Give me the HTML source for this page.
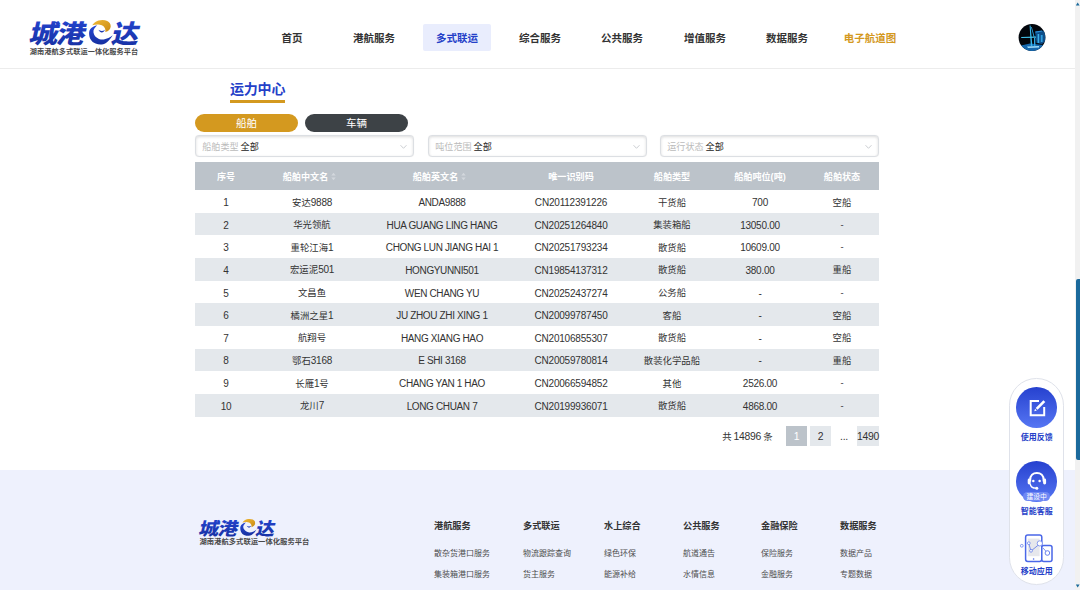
<!DOCTYPE html>
<html lang="zh-CN">
<head>
<meta charset="utf-8">
<title>城港e达 - 运力中心</title>
<style>
*{box-sizing:border-box;margin:0;padding:0}
html,body{width:1080px;height:590px;overflow:hidden;background:#fff}
body{font-family:"Liberation Sans","Noto Sans CJK SC",sans-serif;color:#333;position:relative;font-size:10px}
.abs{position:absolute}
#hdr{position:absolute;left:0;top:0;width:1075px;height:69px;background:#fff;border-bottom:1px solid #ececec}
.nav{position:absolute;top:24px;height:27px;line-height:28px;width:68px;text-align:center;font-size:10.5px;font-weight:bold;color:#333;border-radius:2px}
.nav.on{background:#e9edfd;color:#2440c8}
.nav.gold{color:#d4991f}
#title{position:absolute;left:230px;top:79px;font-size:14px;font-weight:bold;color:#2440c8;line-height:20px;letter-spacing:-0.2px}
#tline{position:absolute;left:230px;top:99.5px;width:55px;height:3px;background:#d4991f}
.pill{position:absolute;top:114px;height:18px;width:103px;border-radius:9px;color:#fff;font-size:10.5px;line-height:18px;text-align:center}
.sel{position:absolute;top:135px;height:22px;border:1px solid #dcdfe3;border-radius:4px;background:#fff;box-shadow:inset 0 1px 3px rgba(0,0,0,.14),0 0 1px rgba(0,0,0,.08);font-size:9.1px;line-height:23px;padding-left:6.2px;color:#222;white-space:nowrap}
.sel i{font-style:normal;color:#bbb;margin-right:2px}
.sel svg{position:absolute;right:6px;top:8px}
#tbl{position:absolute;left:195px;top:161.6px;width:684px;border-collapse:collapse;table-layout:fixed;font-size:9.4px}
#tbl th{height:28.6px;background:#bcc3ca;color:#fff;font-weight:bold;font-size:9.1px;text-align:center;padding:0}
#tbl th:last-child,#tbl td:last-child{padding-left:4px}
#tbl th:nth-child(2),#tbl th:nth-child(3){padding-right:5px}
.n{font-size:10px;letter-spacing:-0.27px}
#tbl td.n{padding-top:2px}
#tbl td.e{letter-spacing:-0.36px}
#tbl td.c{letter-spacing:-0.2px}
.so{display:inline-block;vertical-align:middle;margin-left:3px;margin-top:-2px}
#tbl td{height:22.65px;text-align:center;padding:0;color:#333;white-space:nowrap}
#tbl tbody tr:nth-child(even) td{background:#e4e8ec}
.pg{position:absolute;top:426px;height:20px;line-height:21.5px;font-size:10.4px;letter-spacing:-0.3px;text-align:center;color:#333}
#foot{position:absolute;left:0;top:470px;width:1075px;height:120px;background:#eef1fd}
.fh{position:absolute;top:519px;font-size:9.2px;font-weight:bold;color:#333;line-height:14px;white-space:nowrap}
.fl{position:absolute;font-size:8px;color:#4d4d4d;line-height:12px;white-space:nowrap}
#sb{position:absolute;left:1074.5px;top:0;width:5.5px;height:590px;background:#f1f1f1}
#thumb{position:absolute;left:1075.8px;top:279px;width:4.2px;height:180.5px;background:#1b6a9c;border-radius:2px 0 0 2px}
#float{position:absolute;left:1009px;top:378px;width:54.6px;height:207px;background:#fff;border-radius:27.3px;border:1px solid #dfe2ea}
.fc{position:absolute;left:1016px;width:41.4px;height:41px;border-radius:50%;background:linear-gradient(180deg,#2641cf,#5676f3)}
.ft{position:absolute;left:1008.3px;width:57px;text-align:center;font-size:8px;font-weight:bold;color:#2440c8;line-height:10px}
</style>
</head>
<body>
<div id="hdr">
  <svg class="abs" style="left:0;top:0" width="160" height="68" viewBox="0 0 160 68">
    <defs><linearGradient id="lg" x1="0" y1="0" x2="0" y2="1"><stop offset="0" stop-color="#2547d6"/><stop offset="1" stop-color="#16309f"/></linearGradient>
    <linearGradient id="gg" x1="0" y1="0" x2="1" y2="1"><stop offset="0" stop-color="#f0b938"/><stop offset="1" stop-color="#c98a12"/></linearGradient></defs>
    <g transform="translate(0,43.2) skewX(-13)" font-family="'Noto Sans CJK SC',sans-serif" font-weight="900" font-size="25.5" fill="url(#lg)">
      <text x="28" y="0" textLength="29" lengthAdjust="spacingAndGlyphs">城</text>
      <text x="55.6" y="0" textLength="28.5" lengthAdjust="spacingAndGlyphs">港</text>
      <text x="110.5" y="0" textLength="27.3" lengthAdjust="spacingAndGlyphs">达</text>
    </g>
    <path d="M92.2 25.3 C93.6 23.2 96.2 21.2 98.5 20.6 C101.7 19.7 104.8 19.9 107.2 21 C109.6 22.2 110.8 24.2 110.7 26.4 C110.6 29 108.6 31 105.3 32 C105.6 30.6 105.5 29.4 105 28.4 C104.5 27.4 104 26.7 103.5 26.2 C102.5 25.4 101.3 24.9 99.9 24.7 C97.6 24.3 94.6 24.6 92.2 25.3Z" fill="url(#gg)"/>
    <path d="M97.1 25.3 C94.6 26 92.6 27 91.3 28 C89.6 29.6 89 31.4 89.1 33.5 C89.2 35.8 89.6 37.8 90.7 39.6 C91.8 41.4 93.4 42.8 95.6 43.6 C97.6 44.4 99.7 44.7 101.7 44.5 C103.7 44.3 105.6 43.4 107.2 42 C109.4 40.2 111.4 37.8 112.7 35.3 C111.4 36.5 110 37.4 108.4 38.1 C106.4 39 104.3 39.6 102.3 39.6 C100.4 39.5 98.8 39 97.4 38 C95.8 37 94.7 35.8 94.1 34.4 C93.5 33.2 93.3 31.9 93.5 30.6 C93.8 29.3 94.5 28.2 95.4 27.3 C96 26.5 96.5 25.9 97.1 25.3Z" fill="url(#lg)"/>
    <path d="M98.4 29.8 C99.3 31.4 100.5 32.3 101.8 32.5 C103.1 32.4 104.2 31.5 104.9 29.8 C103.9 30.6 102.8 31 101.7 31 C100.5 31 99.4 30.5 98.4 29.8Z" fill="url(#lg)"/>
    <text x="29.8" y="54.3" font-size="7.15" font-weight="bold" fill="#4a4a4a" textLength="108.4" lengthAdjust="spacing">湖南港航多式联运一体化服务平台</text>
  </svg>
  <div class="nav" style="left:258px">首页</div>
  <div class="nav" style="left:340px">港航服务</div>
  <div class="nav on" style="left:423px">多式联运</div>
  <div class="nav" style="left:506px">综合服务</div>
  <div class="nav" style="left:588px">公共服务</div>
  <div class="nav" style="left:671px">增值服务</div>
  <div class="nav" style="left:753px">数据服务</div>
  <div class="nav gold" style="left:836px">电子航道图</div>
  <svg class="abs" style="left:1016px;top:22px" width="32" height="32" viewBox="1016 22 32 32">
    <defs><clipPath id="ac"><circle cx="1032" cy="37.5" r="13.4"/></clipPath><filter id="bl" x="-30%" y="-30%" width="160%" height="160%"><feGaussianBlur stdDeviation="0.45"/></filter></defs>
    <circle cx="1032" cy="37.5" r="13.4" fill="#02060c"/>
    <g clip-path="url(#ac)" filter="url(#bl)">
      <path d="M1035 31.5 L1045 30.5 L1045.6 41 L1042 44 L1036.5 43Z" fill="#0d4f8a"/>
      <path d="M1021 45.5 L1030 43.6 L1043 45 L1041 51 L1025 51Z" fill="#1268ae"/>
      <path d="M1027 46.6 L1039 46 L1039 47.6 L1028 48Z" fill="#9fdcfa"/>
      <path d="M1029.6 25.5 L1030.6 25.5 L1032.4 46 L1030.8 46Z" fill="#38b8ec"/>
      <path d="M1031 27 L1031.8 27 L1034.6 37 L1033.6 37Z" fill="#2a9fdc"/>
      <path d="M1021 37 L1036 36.4 L1036 37.8 L1021.4 37.9Z" fill="#43c6f0"/>
      <path d="M1037.6 34 L1039.2 34 L1039.2 43 L1037.6 43Z" fill="#39aee8"/>
      <path d="M1040.8 35 L1042.6 35 L1042.6 42 L1040.8 42Z" fill="#2f9fe0"/>
      <path d="M1035.4 31.6 L1042 30.4 L1042 31.6 L1035.6 32.8Z" fill="#2a8fd6"/>
      <path d="M1034 38 L1035.4 38 L1035.4 46 L1034 46Z" fill="#2fa6e4"/>
    </g>
  </svg>
</div>

<div id="title">运力中心</div>
<div id="tline"></div>
<div class="pill" style="left:195px;background:#d4991f">船舶</div>
<div class="pill" style="left:305px;background:#3d4246">车辆</div>

<div class="sel" style="left:195px;width:219px"><i>船舶类型</i>全部<svg width="7" height="6" viewBox="0 0 7 6"><path d="M0.5 1.2 L3.5 4.3 L6.5 1.2" fill="none" stroke="#bfc2c6" stroke-width="0.8"/></svg></div>
<div class="sel" style="left:428px;width:219px"><i>吨位范围</i>全部<svg width="7" height="6" viewBox="0 0 7 6"><path d="M0.5 1.2 L3.5 4.3 L6.5 1.2" fill="none" stroke="#bfc2c6" stroke-width="0.8"/></svg></div>
<div class="sel" style="left:660px;width:219px"><i>运行状态</i>全部<svg width="7" height="6" viewBox="0 0 7 6"><path d="M0.5 1.2 L3.5 4.3 L6.5 1.2" fill="none" stroke="#bfc2c6" stroke-width="0.8"/></svg></div>

<table id="tbl">
<colgroup><col style="width:62px"><col style="width:110px"><col style="width:150px"><col style="width:108px"><col style="width:94px"><col style="width:82px"><col style="width:78px"></colgroup>
<thead><tr><th>序号</th><th>船舶中文名<svg class="so" width="5" height="9" viewBox="0 0 5 9"><path d="M0.3 3.6 L2.5 0.8 L4.7 3.6Z M0.3 5.4 L2.5 8.2 L4.7 5.4Z" fill="#d3d8dd"/></svg></th><th>船舶英文名<svg class="so" width="5" height="9" viewBox="0 0 5 9"><path d="M0.3 3.6 L2.5 0.8 L4.7 3.6Z M0.3 5.4 L2.5 8.2 L4.7 5.4Z" fill="#d3d8dd"/></svg></th><th>唯一识别码</th><th>船舶类型</th><th>船舶吨位(吨)</th><th>船舶状态</th></tr></thead>
<tbody>
<tr><td class="n">1</td><td>安达<span class="n">9888</span></td><td class="n e">ANDA9888</td><td class="n c">CN20112391226</td><td>干货船</td><td class="n">700</td><td>空船</td></tr>
<tr><td class="n">2</td><td>华光领航</td><td class="n e">HUA GUANG LING HANG</td><td class="n c">CN20251264840</td><td>集装箱船</td><td class="n">13050.00</td><td>-</td></tr>
<tr><td class="n">3</td><td>重轮江海<span class="n">1</span></td><td class="n e">CHONG LUN JIANG HAI 1</td><td class="n c">CN20251793234</td><td>散货船</td><td class="n">10609.00</td><td>-</td></tr>
<tr><td class="n">4</td><td>宏运泥<span class="n">501</span></td><td class="n e">HONGYUNNI501</td><td class="n c">CN19854137312</td><td>散货船</td><td class="n">380.00</td><td>重船</td></tr>
<tr><td class="n">5</td><td>文昌鱼</td><td class="n e">WEN CHANG YU</td><td class="n c">CN20252437274</td><td>公务船</td><td class="n">-</td><td>-</td></tr>
<tr><td class="n">6</td><td>橘洲之星<span class="n">1</span></td><td class="n e">JU ZHOU ZHI XING 1</td><td class="n c">CN20099787450</td><td>客船</td><td class="n">-</td><td>空船</td></tr>
<tr><td class="n">7</td><td>航翔号</td><td class="n e">HANG XIANG HAO</td><td class="n c">CN20106855307</td><td>散货船</td><td class="n">-</td><td>空船</td></tr>
<tr><td class="n">8</td><td>鄂石<span class="n">3168</span></td><td class="n e">E SHI 3168</td><td class="n c">CN20059780814</td><td>散装化学品船</td><td class="n">-</td><td>重船</td></tr>
<tr><td class="n">9</td><td>长雁<span class="n">1</span>号</td><td class="n e">CHANG YAN 1 HAO</td><td class="n c">CN20066594852</td><td>其他</td><td class="n">2526.00</td><td>-</td></tr>
<tr><td class="n">10</td><td>龙川<span class="n">7</span></td><td class="n e">LONG CHUAN 7</td><td class="n c">CN20199936071</td><td>散货船</td><td class="n">4868.00</td><td>-</td></tr>
</tbody>
</table>

<div class="pg" style="left:701.3px;width:92px;font-size:9.4px">共 <span class="n" style="font-size:10.4px">14896</span> 条</div>
<div class="pg" style="left:786px;width:21px;background:#bcc3ca;color:#fff">1</div>
<div class="pg" style="left:810px;width:21px;background:#e4e8ec">2</div>
<div class="pg" style="left:834px;width:20px">...</div>
<div class="pg" style="left:857px;width:22px;background:#e4e8ec">1490</div>

<div id="foot"></div>
<svg class="abs" style="left:0;top:470px" width="400" height="120" viewBox="0 470 400 120">
  <g transform="translate(178.8,505.1) scale(0.69)">
    <g transform="translate(0,43.2) skewX(-13)" font-family="'Noto Sans CJK SC',sans-serif" font-weight="900" font-size="25.5" fill="url(#lg)">
      <text x="28" y="0" textLength="29" lengthAdjust="spacingAndGlyphs">城</text>
      <text x="55.6" y="0" textLength="28.5" lengthAdjust="spacingAndGlyphs">港</text>
      <text x="110.5" y="0" textLength="27.3" lengthAdjust="spacingAndGlyphs">达</text>
    </g>
    <path d="M92.2 25.3 C93.6 23.2 96.2 21.2 98.5 20.6 C101.7 19.7 104.8 19.9 107.2 21 C109.6 22.2 110.8 24.2 110.7 26.4 C110.6 29 108.6 31 105.3 32 C105.6 30.6 105.5 29.4 105 28.4 C104.5 27.4 104 26.7 103.5 26.2 C102.5 25.4 101.3 24.9 99.9 24.7 C97.6 24.3 94.6 24.6 92.2 25.3Z" fill="url(#gg)"/>
    <path d="M97.1 25.3 C94.6 26 92.6 27 91.3 28 C89.6 29.6 89 31.4 89.1 33.5 C89.2 35.8 89.6 37.8 90.7 39.6 C91.8 41.4 93.4 42.8 95.6 43.6 C97.6 44.4 99.7 44.7 101.7 44.5 C103.7 44.3 105.6 43.4 107.2 42 C109.4 40.2 111.4 37.8 112.7 35.3 C111.4 36.5 110 37.4 108.4 38.1 C106.4 39 104.3 39.6 102.3 39.6 C100.4 39.5 98.8 39 97.4 38 C95.8 37 94.7 35.8 94.1 34.4 C93.5 33.2 93.3 31.9 93.5 30.6 C93.8 29.3 94.5 28.2 95.4 27.3 C96 26.5 96.5 25.9 97.1 25.3Z" fill="url(#lg)"/>
    <path d="M98.4 29.8 C99.3 31.4 100.5 32.3 101.8 32.5 C103.1 32.4 104.2 31.5 104.9 29.8 C103.9 30.6 102.8 31 101.7 31 C100.5 31 99.4 30.5 98.4 29.8Z" fill="url(#lg)"/>
  </g>
  <text x="199.4" y="544" font-size="7.3" font-weight="bold" fill="#4a4a4a" textLength="110" lengthAdjust="spacing">湖南港航多式联运一体化服务平台</text>
</svg>
<div class="fh" style="left:434px">港航服务</div>
<div class="fh" style="left:523px">多式联运</div>
<div class="fh" style="left:604px">水上综合</div>
<div class="fh" style="left:683px">公共服务</div>
<div class="fh" style="left:761px">金融保险</div>
<div class="fh" style="left:840px">数据服务</div>

<div class="fl" style="left:434px;top:548px">散杂货港口服务</div>
<div class="fl" style="left:523px;top:548px">物流跟踪查询</div>
<div class="fl" style="left:604px;top:548px">绿色环保</div>
<div class="fl" style="left:683px;top:548px">航道通告</div>
<div class="fl" style="left:761px;top:548px">保险服务</div>
<div class="fl" style="left:840px;top:548px">数据产品</div>
<div class="fl" style="left:434px;top:569px">集装箱港口服务</div>
<div class="fl" style="left:523px;top:569px">货主服务</div>
<div class="fl" style="left:604px;top:569px">能源补给</div>
<div class="fl" style="left:683px;top:569px">水情信息</div>
<div class="fl" style="left:761px;top:569px">金融服务</div>
<div class="fl" style="left:840px;top:569px">专题数据</div>

<div id="float"></div>
<div class="fc" style="top:387px"></div>
<svg class="abs" style="left:1016px;top:386px" width="42" height="42" viewBox="0 0 42 42">
  <path d="M23 15.1 H14.7 V29.2 H28.2 V21" fill="none" stroke="#fff" stroke-width="2"/>
  <path d="M27.4 14.2 L29.3 16.1 L21.6 23.8 L19.7 21.9Z" fill="#fff"/>
  <path d="M19.1 22.7 L20.8 24.4 L18.3 25.2Z" fill="#fff"/>
</svg>
<div class="ft" style="top:432.5px">使用反馈</div>
<div class="fc" style="top:461px"><div style="position:absolute;left:7.2px;top:30.6px;width:27px;height:9.8px;border-radius:4.9px;background:#6f88f4;color:#fff;font-size:6.8px;line-height:10.6px;text-align:center;white-space:nowrap">建设中</div></div>
<svg class="abs" style="left:1016px;top:461px" width="42" height="42" viewBox="0 0 42 42">
  <path d="M14.2 20.6 V18.8 C14.2 14.6 17 11.9 20.9 11.9 C24.8 11.9 27.6 14.6 27.6 18.8 V20.6" fill="none" stroke="#fff" stroke-width="2"/>
  <rect x="11.7" y="17.6" width="3" height="5.8" rx="1.4" fill="#fff"/>
  <rect x="27.1" y="17.6" width="3" height="5.8" rx="1.4" fill="#fff"/>
  <path d="M14.2 22.6 C14.4 25.4 16.6 27.2 20.4 27.2" fill="none" stroke="#fff" stroke-width="1.3"/>
  <circle cx="20.8" cy="27.2" r="1.5" fill="#fff"/>
  <circle cx="17.3" cy="19.9" r="1.25" fill="#fff"/><circle cx="23.6" cy="19.9" r="1.25" fill="#fff"/>
</svg>
<div class="ft" style="top:506.5px">智能客服</div>
<svg class="abs" style="left:1016px;top:530px" width="42" height="36" viewBox="1016 530 42 36">
  <rect x="1025.6" y="535" width="16.2" height="26.4" rx="2.2" fill="#fff" stroke="#4a67e8" stroke-width="1.5"/>
  <rect x="1027.8" y="538.6" width="11.8" height="17.6" fill="#e6e7ec"/>
  <circle cx="1033.6" cy="559" r="0.8" fill="#4a67e8"/>
  <rect x="1041.8" y="545.4" width="10.2" height="16" rx="2" fill="#fff" stroke="#4a67e8" stroke-width="1.5"/>
  <path d="M1028.8 543.6 L1031 551 L1039.6 544" fill="none" stroke="#4a67e8" stroke-width="0.7"/>
  <path d="M1043 548 L1047.5 553" fill="none" stroke="#4a67e8" stroke-width="0.7"/>
  <circle cx="1021.8" cy="545.8" r="1.4" fill="#fff" stroke="#5a75ea" stroke-width="0.7"/>
  <circle cx="1028.8" cy="543.2" r="1.4" fill="#fff" stroke="#5a75ea" stroke-width="0.7"/>
  <circle cx="1031" cy="550.8" r="1.4" fill="#fff" stroke="#5a75ea" stroke-width="0.7"/>
  <circle cx="1039.8" cy="543.4" r="2.6" fill="#fff" stroke="#5a75ea" stroke-width="0.7"/>
  <circle cx="1047.4" cy="553" r="2.3" fill="#fff" stroke="#5a75ea" stroke-width="0.9"/>
</svg>
<div class="ft" style="top:566.9px">移动应用</div>

<div id="sb"></div>
<div id="thumb"></div>
<svg class="abs" style="left:1075px;top:0" width="5" height="590" viewBox="0 0 5 590"><path d="M0.8 5.6 L2.7 2.6 L4.6 5.6Z M0.8 584.4 L2.7 587.4 L4.6 584.4Z" fill="#1b6a9c"/></svg>
</body>
</html>
